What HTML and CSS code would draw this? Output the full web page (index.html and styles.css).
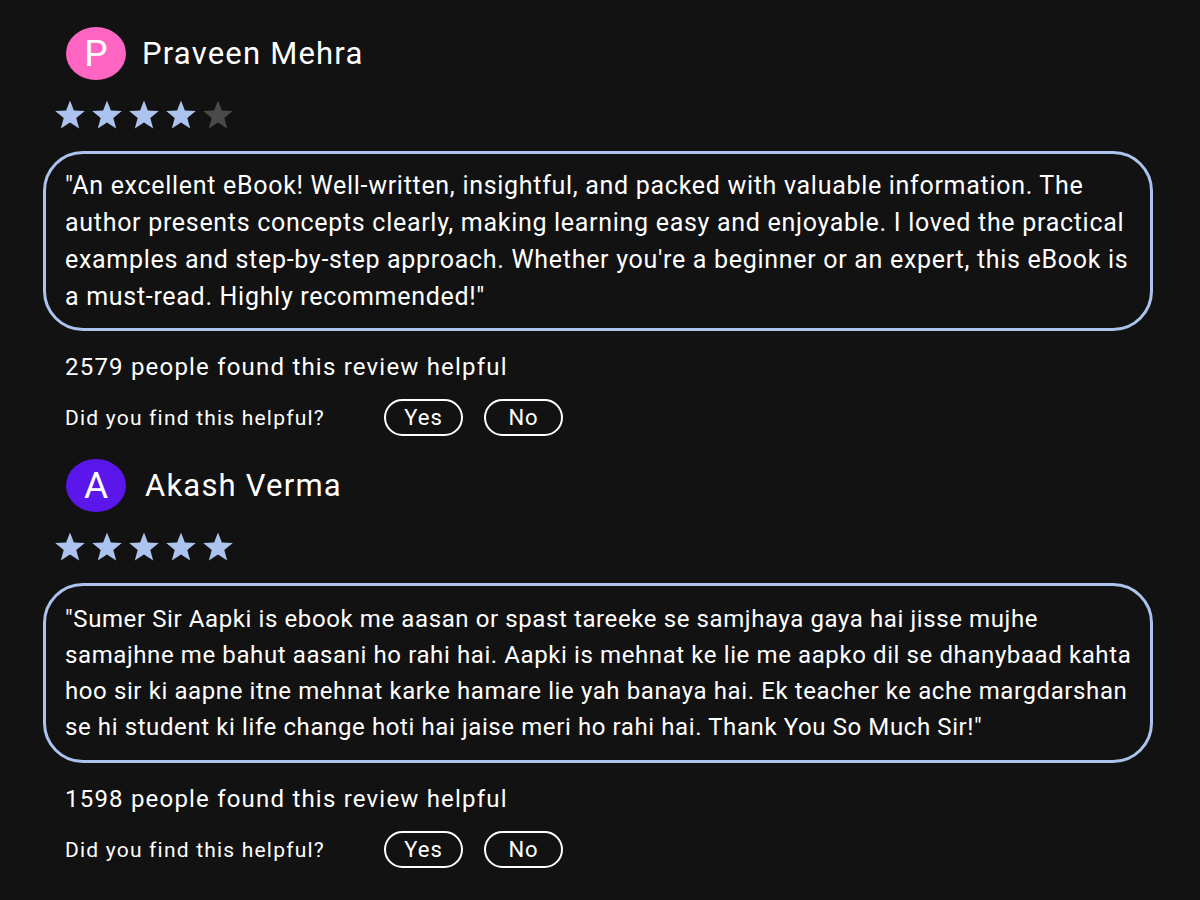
FILE: index.html
```html
<!DOCTYPE html>
<html lang="en">
<head>
<meta charset="utf-8">
<title>Reviews</title>
<link rel="stylesheet" href="styles.css">
</head>
<body>
<svg width="0" height="0" class="defs">
  <defs>
    <path id="star" d="M16 1.5 L19.9 11.6 L30.8 12.1 L22.3 18.9 L25.2 29.4 L16 23.4 L6.8 29.4 L9.7 18.9 L1.2 12.1 L12.1 11.6 Z"/>
  </defs>
</svg>
<main class="reviews">
  <section class="review">
    <div class="head">
      <div class="avatar pink">P</div>
      <div class="name">Praveen Mehra</div>
    </div>
    <div class="stars">
      <svg class="star on" viewBox="0 0 32 31"><use href="#star"/></svg>
      <svg class="star on" viewBox="0 0 32 31"><use href="#star"/></svg>
      <svg class="star on" viewBox="0 0 32 31"><use href="#star"/></svg>
      <svg class="star on" viewBox="0 0 32 31"><use href="#star"/></svg>
      <svg class="star off" viewBox="0 0 32 31"><use href="#star"/></svg>
    </div>
    <p class="body">"An excellent eBook! Well-written, insightful, and packed with valuable information. The author presents concepts clearly, making learning easy and enjoyable. I loved the practical examples and step-by-step approach. Whether you're a beginner or an expert, this eBook is a must-read. Highly recommended!"</p>
    <div class="count">2579 people found this review helpful</div>
    <div class="ask">
      <span class="q">Did you find this helpful?</span>
      <button class="btn">Yes</button>
      <button class="btn">No</button>
    </div>
  </section>
  <section class="review">
    <div class="head">
      <div class="avatar purple">A</div>
      <div class="name name2">Akash Verma</div>
    </div>
    <div class="stars">
      <svg class="star on" viewBox="0 0 32 31"><use href="#star"/></svg>
      <svg class="star on" viewBox="0 0 32 31"><use href="#star"/></svg>
      <svg class="star on" viewBox="0 0 32 31"><use href="#star"/></svg>
      <svg class="star on" viewBox="0 0 32 31"><use href="#star"/></svg>
      <svg class="star on" viewBox="0 0 32 31"><use href="#star"/></svg>
    </div>
    <p class="body body-compact">"Sumer Sir Aapki is ebook me aasan or spast tareeke se samjhaya gaya hai jisse mujhe samajhne me bahut aasani ho rahi hai. Aapki is mehnat ke lie me aapko dil se dhanybaad kahta hoo sir ki aapne itne mehnat karke hamare lie yah banaya hai. Ek teacher ke ache margdarshan se hi student ki life change hoti hai jaise meri ho rahi hai. Thank You So Much Sir!"</p>
    <div class="count">1598 people found this review helpful</div>
    <div class="ask">
      <span class="q">Did you find this helpful?</span>
      <button class="btn">Yes</button>
      <button class="btn">No</button>
    </div>
  </section>
</main>
</body>
</html>
```

FILE: styles.css
```css
html, body {
  margin: 0;
  padding: 0;
  background: #121212;
  color: #ffffff;
  font-family: Roboto, "Liberation Sans", Arial, sans-serif;
  letter-spacing: 1.2px;
}
.defs {
  position: absolute;
  width: 0;
  height: 0;
}
.reviews {
  padding: 27px 0 0 43px;
  width: 1110px;
}
.review {
  display: flex;
  flex-direction: column;
  margin-bottom: 23px;
}
.head {
  display: flex;
  align-items: center;
  height: 53px;
  margin-left: 23px;
}
.avatar {
  width: 60px;
  height: 53px;
  border-radius: 50%;
  display: flex;
  align-items: center;
  justify-content: center;
  font-size: 37px;
  letter-spacing: 0;
  color: #fff;
  flex-shrink: 0;
}
.pink { background: #ff66c4; }
.purple { background: #5b17eb; }
.name {
  font-size: 31px;
  margin-left: 16px;
}
.name2 { margin-left: 19px; }
.stars {
  display: flex;
  gap: 5px;
  margin: 19px 0 0 11px;
  height: 31px;
}
.star {
  width: 32px;
  height: 31px;
}
.star.on { fill: #abc3ee; }
.star.off { fill: #4a4a4a; }
.body {
  margin: 21px 0 0 0;
  border: 3px solid #abc3ee;
  border-radius: 40px;
  padding: 13px 14px 13px 19px;
  font-size: 25px;
  letter-spacing: 0.7px;
  line-height: 37px;
}
.body-compact {
  padding: 15px 12px 15px 19px;
  font-size: 24px;
  letter-spacing: 0.6px;
  line-height: 36px;
}
.count {
  margin: 21px 0 0 22px;
  font-size: 24px;
  line-height: 30px;
}
.ask {
  display: flex;
  align-items: center;
  margin: 17px 0 0 22px;
}
.q {
  font-size: 21px;
  width: 319px;
}
.btn {
  width: 79px;
  height: 37px;
  border: 2px solid #ffffff;
  border-radius: 19px;
  background: transparent;
  color: #fff;
  font-family: inherit;
  letter-spacing: 1px;
  font-size: 22px;
  padding: 0;
  margin-right: 21px;
}
```
